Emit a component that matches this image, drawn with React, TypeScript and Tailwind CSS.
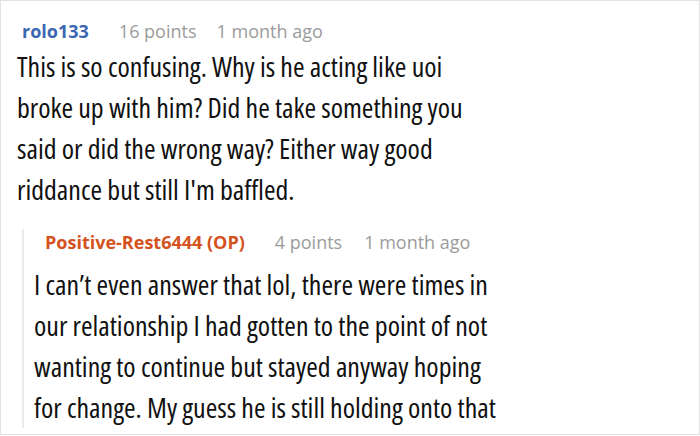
export default function App() {
  return (
    <div className="w-[700px] h-[436px] bg-white overflow-hidden" style={{ fontFamily: '"Open Sans", "Noto Sans", sans-serif' }}>
      <div className="h-[435px] border border-[#e2e2e2] pl-[16px] pt-[17px]">
        <div className="flex items-baseline text-[18px] leading-[26px] pl-[5px]">
          <span className="font-bold text-[#3b66b3] mr-[30px]">rolo133</span>
          <span className="text-[#9b9b9b] mr-[20px]">16 points</span>
          <span className="text-[#9b9b9b]">1 month ago</span>
        </div>
        <p className="text-[28px] leading-[41px] text-[#111] mt-[2px] [font-stretch:82%]">
          This is so confusing. Why is he acting like uoi
          <br />
          broke up with him? Did he take something you
          <br />
          said or did the wrong way? Either way good
          <br />
          riddance but still I'm baffled.
        </p>
        <div className="ml-[5px] mt-[33px] border-l-2 border-[#ebebeb] pl-[21px]">
          <div className="flex items-baseline text-[18px] leading-[26px] -mt-[14px]">
            <span className="font-bold text-[#d4521d] mr-[30px]">Positive-Rest6444 (OP)</span>
            <span className="text-[#9b9b9b] mr-[22px]">4 points</span>
            <span className="text-[#9b9b9b]">1 month ago</span>
          </div>
          <p className="text-[28px] leading-[41px] text-[#111] mt-[9px] -ml-[11px] [font-stretch:82%]">
            I can’t even answer that lol, there were times in
            <br />
            our relationship I had gotten to the point of not
            <br />
            wanting to continue but stayed anyway hoping
            <br />
            for change. My guess he is still holding onto that
          </p>
        </div>
      </div>
    </div>
  );
}
